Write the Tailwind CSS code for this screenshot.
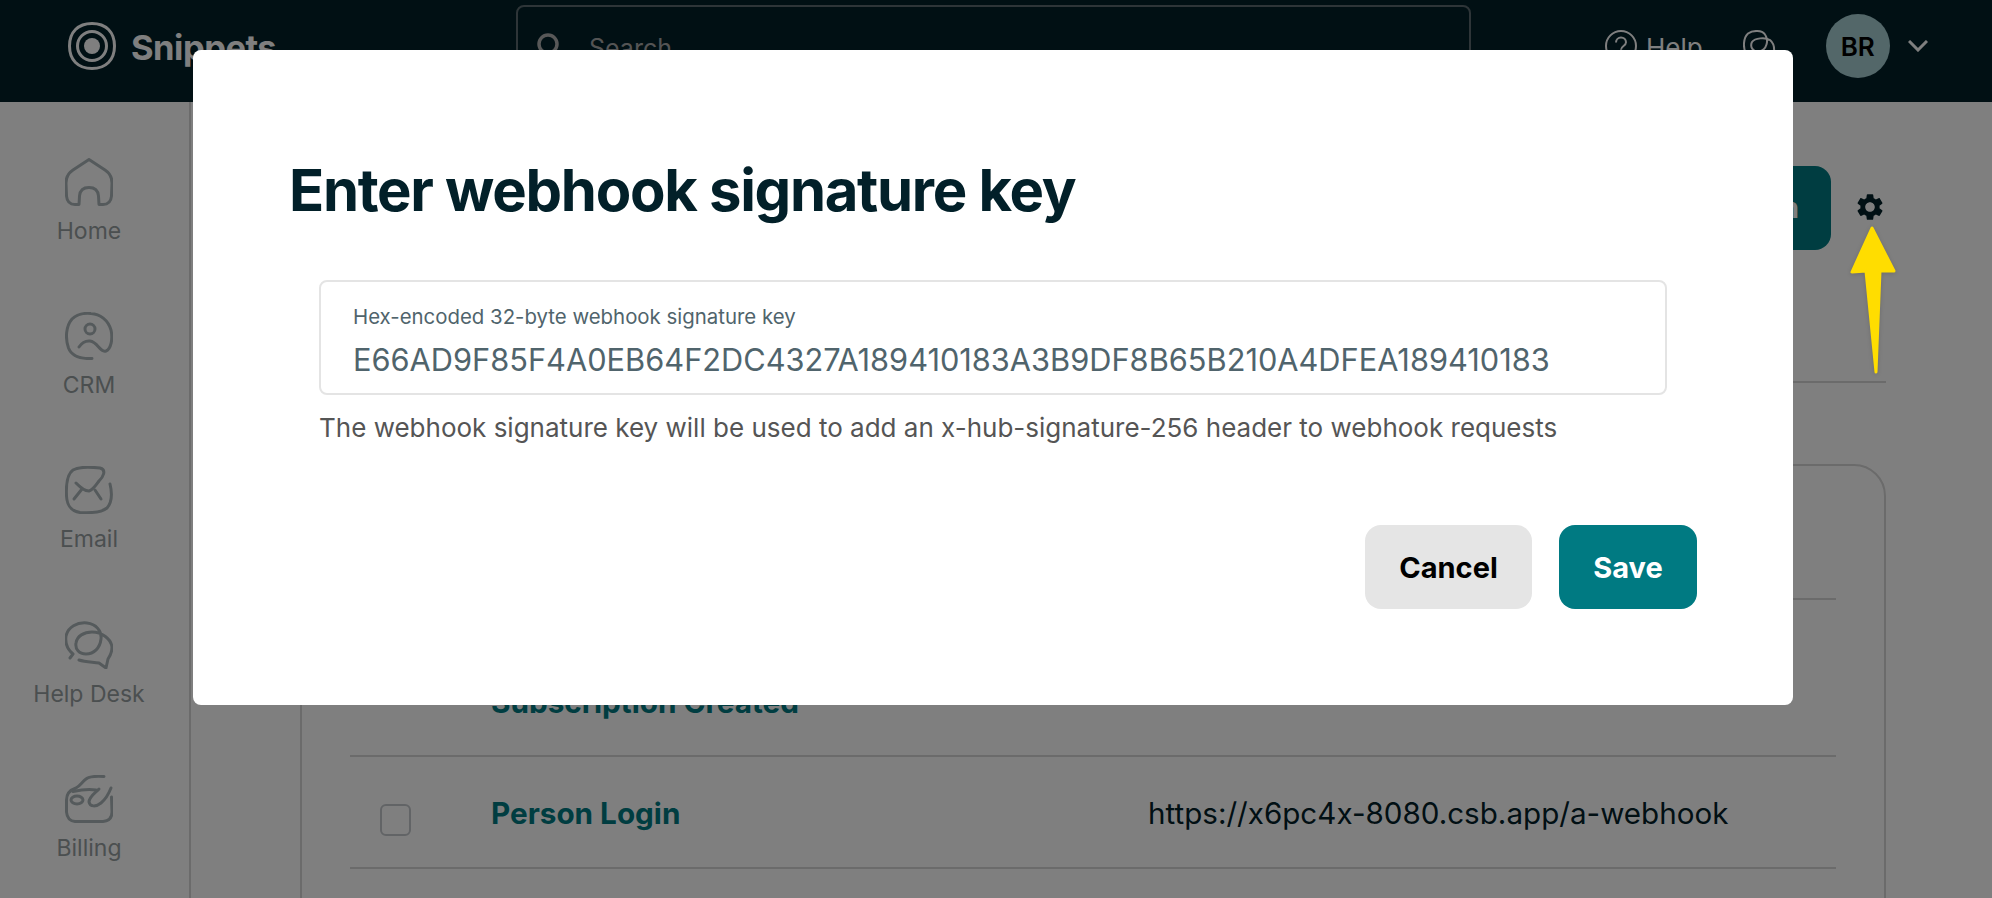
<!DOCTYPE html>
<html lang="en">
  <head>
    <meta charset="UTF-8" />
    <title>Webhooks</title>
    <script src="https://cdn.jsdelivr.net/npm/@tailwindcss/browser@4"></script>
  </head>
  <body class="relative w-[1992px] h-[898px] overflow-hidden bg-white font-['Inter',sans-serif]">
    <!-- Header -->
    <header class="flex items-center h-[102px] pb-[10px] bg-[#022029] text-white">
      <div class="flex items-center w-[516px] pl-[68px]">
        <svg class="w-[48px] h-[48px]" viewBox="0 0 48 48" fill="none" stroke="currentColor" stroke-width="3">
          <path d="M24 1.500C38 1.500 46.500 10 46.500 24S38 46.500 24 46.500 1.500 38 1.500 24 10 1.500 24 1.500z" />
          <circle cx="24" cy="24" r="14.500" />
          <circle cx="24" cy="24" r="8" fill="currentColor" stroke="none" />
        </svg>
        <span class="ml-[15px] pt-[3px] text-[34.5px] font-bold tracking-[-0.5px]">Snippets</span>
      </div>
      <div class="flex items-center self-start mt-[5px] w-[955px] h-[92px] pl-[19px] pr-[20px] pb-[10px] border-2 border-[#5c6b70] rounded-lg">
        <svg class="w-[26px] h-[26px] text-[#b0b0b0]" viewBox="0 0 26 26" fill="none" stroke="currentColor" stroke-width="3.500">
          <circle cx="11" cy="11" r="9" />
          <path d="M18 18l6 6" />
        </svg>
        <span class="ml-[26px] pt-[5px] text-[25px] text-[#a8a8a8]">Search</span>
      </div>
      <div class="flex items-center ml-[134px]">
        <svg class="w-[32px] h-[32px]" viewBox="0 0 32 32" fill="none" stroke="currentColor" stroke-width="2">
          <circle cx="16" cy="16" r="15" />
          <path d="M11 12.500c0-3 2.300-5 5-5s5 2 5 4.800c0 3.700-5 3.700-5 7.500" />
          <circle cx="16" cy="24" r="1.200" fill="currentColor" stroke="none" />
        </svg>
        <span class="ml-[9px] pt-[3px] text-[26px]">Help</span>
      </div>
      <svg class="ml-[40px] w-[33px] h-[33px]" viewBox="0 0 33 33" fill="none" stroke="currentColor" stroke-width="2">
        <path d="M3 24C0 18 0 8 5 3.500 10 0 19 0 22 4.500 26 10 24 20 16 21.500 9 22 7 16 9 12 12 8 22 7 27 10 33 15 32 26 27 30" />
      </svg>
      <div class="ml-[50px] flex items-center justify-center w-[64px] h-[64px] rounded-full bg-[#a6ced2] text-[26px] font-semibold text-black">BR</div>
      <svg class="ml-[18px] w-[20px] h-[12px]" viewBox="0 0 20 12" fill="none" stroke="currentColor" stroke-width="3">
        <path d="M1 1l9 9 9-9" />
      </svg>
    </header>

    <div class="flex">
      <!-- Sidebar -->
      <nav class="flex flex-col items-center w-[191px] h-[796px] pt-[56px] pr-[11px] border-r-2 border-[#d6d6d6] text-[#969ea0] text-[23px] leading-[28px]">
        <a class="flex flex-col items-center h-[154px]">
          <svg class="w-[48px] h-[48px] mb-[11px] text-[#aab5b8]" viewBox="0 0 48 48" fill="none" stroke="currentColor" stroke-width="3" stroke-linejoin="round">
            <path d="M24 1.500L40 12C46 16 47 20 47 25L46.500 38C46 44 43 46.500 38 46.500H34L33.500 38C33 32 29 29.500 24 29.500S15 32 14.500 38L14 46.500H10C5 46.500 2 44 1.500 38L1 25C1 20 2 16 8 12z" />
          </svg>
          <span>Home</span>
        </a>
        <a class="flex flex-col items-center h-[154px]">
          <svg class="w-[48px] h-[48px] mb-[11px] text-[#aab5b8]" viewBox="0 0 48 48" fill="none" stroke="currentColor" stroke-width="3" stroke-linecap="round">
            <path d="M27 46.500C16 47 7 45 3.500 36 0 26 1 14 7 7 12 2 20 1 26 1.500 35 2 43 8 46 18 48 27 46 37 41 39 35 41 33 30 25 29 20 28.500 16 32 14 35" />
            <circle cx="25" cy="17" r="5" />
          </svg>
          <span>CRM</span>
        </a>
        <a class="flex flex-col items-center h-[155px]">
          <svg class="w-[48px] h-[48px] mb-[11px] text-[#aab5b8]" viewBox="0 0 48 48" fill="none" stroke="currentColor" stroke-width="3" stroke-linecap="round">
            <path d="M45 18C47 26 47 36 42 42 36 47 24 47 15 46.500 6 45 2 40 1.500 30 1 20 2 8 8 4 15 0 26 1 35 2 42 4 38 11 34 15 31 19 28 24 24 25 19 25 15 21 11 17" />
            <path d="M9 33L17 23M36 33L30 24" />
          </svg>
          <span>Email</span>
        </a>
        <a class="flex flex-col items-center h-[154px]">
          <svg class="w-[48px] h-[48px] mb-[11px] text-[#aab5b8]" viewBox="0 0 48 48" fill="none" stroke="currentColor" stroke-width="3" stroke-linecap="round" stroke-linejoin="round">
            <path d="M5 37L8 33C2 28 0 22 1 15 3 6 12 1 22 2 31 3 37 10 36 18 35 27 29 33 21 33 14 33 10 28 11 22 12 15 19 11 27 11 37 11 46 18 47 26 47 31 45 35 43 38L41 47 34 42C27 41 20 41 14 39" />
          </svg>
          <span>Help Desk</span>
        </a>
        <a class="flex flex-col items-center">
          <svg class="w-[48px] h-[48px] mb-[11px] text-[#aab5b8]" viewBox="0 0 48 48" fill="none" stroke="currentColor" stroke-width="3" stroke-linecap="round">
            <path d="M39 1.500C32 1 25 1 21 4 17 7 15 11 11 13 5 15 1.500 18 1.500 25L1.500 37C2 43 5 46 10 46.500H38C44 46 47 43 47 37L46.500 22" />
            <path d="M8 16.500C15 15 24 14 31 15" />
            <ellipse cx="12" cy="25" rx="6" ry="4" />
            <path d="M34 14C30 18 24 22 24 27 25 32 31 32 36 28 41 24 44 18 46 13" />
          </svg>
          <span>Billing</span>
        </a>
      </nav>

      <!-- Main -->
      <main class="flex-1 h-[796px] overflow-hidden pl-[109px] pr-[106px]">
        <div class="flex justify-end items-start h-[281px] pt-[64px] border-b-2 border-[#d6d6d6]">
          <button class="w-[320px] h-[84px] pr-[32px] rounded-2xl bg-[#007a82] text-right text-[28px] font-bold text-white">Add subscription</button>
          <svg class="ml-[23px] mt-[25px] w-[32px] h-[32px] text-[#022029]" viewBox="0 0 24 24" fill="currentColor">
            <path d="M19.14 12.94c.04-.3.06-.61.06-.94 0-.32-.02-.64-.07-.94l2.03-1.58c.18-.14.23-.41.12-.61l-1.92-3.32c-.12-.22-.37-.29-.59-.22l-2.39.96c-.5-.38-1.03-.7-1.62-.94l-.36-2.54c-.04-.24-.24-.41-.48-.41h-3.84c-.24 0-.43.17-.47.41l-.36 2.54c-.59.24-1.13.57-1.62.94l-2.39-.96c-.22-.08-.47 0-.59.22L2.74 8.87c-.12.21-.08.47.12.61l2.03 1.58c-.05.3-.09.63-.09.94s.02.64.07.94l-2.03 1.58c-.18.14-.23.41-.12.61l1.92 3.32c.12.22.37.29.59.22l2.39-.96c.5.38 1.03.7 1.62.94l.36 2.54c.05.24.24.41.48.41h3.84c.24 0 .44-.17.47-.41l.36-2.54c.59-.24 1.13-.56 1.62-.94l2.39.96c.22.08.47 0 .59-.22l1.92-3.32c.12-.22.07-.47-.12-.61l-2.01-1.58zM12 15.6c-1.98 0-3.6-1.62-3.6-3.6s1.62-3.6 3.6-3.6 3.6 1.62 3.6 3.6-1.62 3.6-3.6 3.6z" />
          </svg>
        </div>
        <div class="mt-[81px] h-[600px] px-[48px] border-2 border-[#d6d6d6] rounded-[32px]">
          <div class="h-[134px] border-b-2 border-[#d6d6d6]"></div>
          <div class="flex items-end h-[157px] pb-[30px] border-b-2 border-[#d6d6d6] text-[29.7px] font-bold text-[#007a82]">
            <span class="ml-[141px]">Subscription Created</span>
          </div>
          <div class="flex items-center h-[112px] pt-[2px] border-b-2 border-[#d6d6d6]">
            <span class="ml-[30px] mt-[14px] w-[31px] h-[32px] border-2 border-[#c4c8cc] rounded-md bg-white"></span>
            <span class="ml-[80px] w-[657px] text-[29.7px] font-bold text-[#007a82]">Person Login</span>
            <span class="text-[29.6px] text-[#022029]">https://x6pc4x-8080.csb.app/a-webhook</span>
          </div>
        </div>
      </main>
    </div>

    <!-- Overlay -->
    <div class="absolute inset-0 bg-black/50"></div>

    <!-- Yellow annotation arrow -->
    <svg class="absolute left-[1840px] top-[220px] w-[70px] h-[165px] drop-shadow-sm" viewBox="0 0 70 165" fill="#ffdd00" stroke="#ffdd00" stroke-width="3" stroke-linejoin="round">
      <path d="M32 8L12 52L26 51L36 152L40 51L54 51z" />
    </svg>

    <!-- Modal -->
    <div class="absolute left-[193px] top-[50px] w-[1600px] h-[655px] rounded-lg bg-white pl-[96px] pr-[96px] pt-[104px]">
      <h2 class="text-[58px] leading-[72px] font-bold tracking-[-1.3px] text-[#022029]">Enter webhook signature key</h2>
      <div class="ml-[30px] mt-[54px] w-[1348px] h-[115px] pl-[32px] pt-[21px] border-2 border-[#e4e4e4] rounded-lg">
        <div class="text-[20.4px] leading-[28px] text-[#50646c]">Hex-encoded 32-byte webhook signature key</div>
        <div class="mt-[11px] text-[30.75px] leading-[36px] text-[#50646c]">E66AD9F85F4A0EB64F2DC4327A189410183A3B9DF8B65B210A4DFEA189410183</div>
      </div>
      <p class="ml-[30px] mt-[15px] text-[26px] leading-[36px] text-[#555555]">The webhook signature key will be used to add an x-hub-signature-256 header to webhook requests</p>
      <div class="flex justify-end gap-[27px] mt-[79px]">
        <button class="w-[167px] h-[84px] pt-[2px] rounded-2xl bg-[#e5e5e5] text-[29px] font-bold text-black">Cancel</button>
        <button class="w-[138px] h-[84px] pt-[2px] rounded-2xl bg-[#007a82] text-[29px] font-bold text-white">Save</button>
      </div>
    </div>
  </body>
</html>
